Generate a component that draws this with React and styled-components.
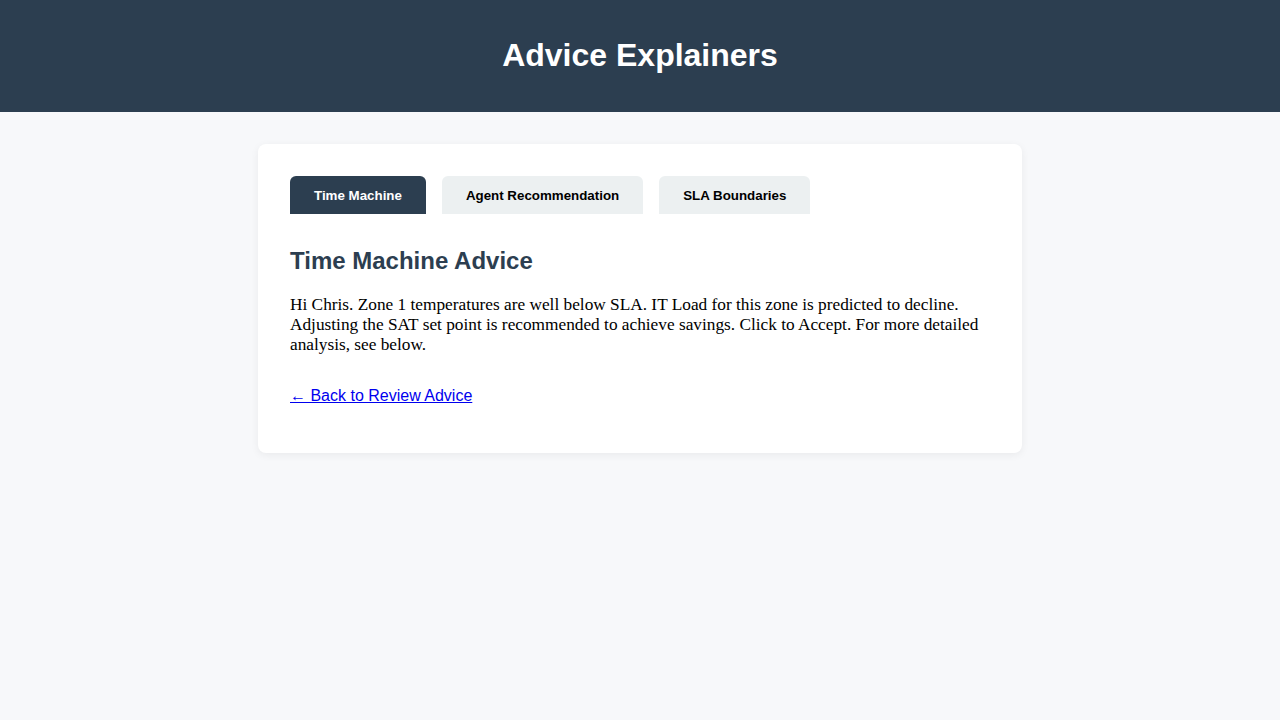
import React, { useState } from "react";
import styled, { createGlobalStyle } from "styled-components";

const Global = createGlobalStyle`
  html, body { margin: 0; padding: 0; }
  body {
    background: #f7f8fa;
    font-family: "Liberation Sans", Arial, sans-serif;
    min-height: 100vh;
  }
`;

const Header = styled.header`
  background: #2c3e50;
  color: #ffffff;
  padding: 16px;
  text-align: center;
`;

const Title = styled.h1`
  margin: 21.44px 0;
  font-size: 32px;
  font-weight: bold;
  line-height: normal;
`;

const Main = styled.main`
  display: flex;
  justify-content: center;
  padding-top: 32px;
`;

const Card = styled.section`
  width: 764px;
  box-sizing: border-box;
  background: #ffffff;
  border-radius: 8px;
  padding: 32px;
  box-shadow: 0 2px 8px rgba(0, 0, 0, 0.06);
`;

const Tabs = styled.div`
  display: flex;
  gap: 16px;
  margin-bottom: 33px;
`;

const Tab = styled.button`
  border: none;
  border-radius: 6px 6px 0 0;
  padding: 1px 24px 0;
  height: 38px;
  font-family: "Liberation Sans", Arial, sans-serif;
  font-size: 13.33px;
  font-weight: bold;
  cursor: pointer;
  background: ${(p) => (p.$active ? "#2c3e50" : "#ecf0f1")};
  color: ${(p) => (p.$active ? "#ffffff" : "#000000")};
`;

const Heading = styled.h2`
  margin: 0 0 20px;
  font-size: 24px;
  font-weight: bold;
  color: #2c3e50;
  line-height: normal;
`;

const Body = styled.p`
  margin: 0;
  font-family: "Liberation Serif", "Times New Roman", serif;
  font-size: 17.3px;
  line-height: 20px;
  color: #000;
`;

const LinkRow = styled.div`
  margin: 32px 0 16px;
`;

const BackLink = styled.a`
  color: #0000ee;
  font-size: 16px;
  text-decoration: underline;
`;

const tabs = ["Time Machine", "Agent Recommendation", "SLA Boundaries"];

export default function App() {
  const [active, setActive] = useState(0);
  return (
    <>
      <Global />
      <Header>
        <Title>Advice Explainers</Title>
      </Header>
      <Main>
        <Card>
          <Tabs>
            {tabs.map((t, i) => (
              <Tab key={t} $active={i === active} onClick={() => setActive(i)}>
                {t}
              </Tab>
            ))}
          </Tabs>
          <Heading>Time Machine Advice</Heading>
          <Body>
            Hi Chris. Zone 1 temperatures are well below SLA. IT Load for this zone is
            predicted to decline. Adjusting the SAT set point is recommended to achieve
            savings. Click to Accept. For more detailed analysis, see below.
          </Body>
          <LinkRow>
            <BackLink href="#">← Back to Review Advice</BackLink>
          </LinkRow>
        </Card>
      </Main>
    </>
  );
}
